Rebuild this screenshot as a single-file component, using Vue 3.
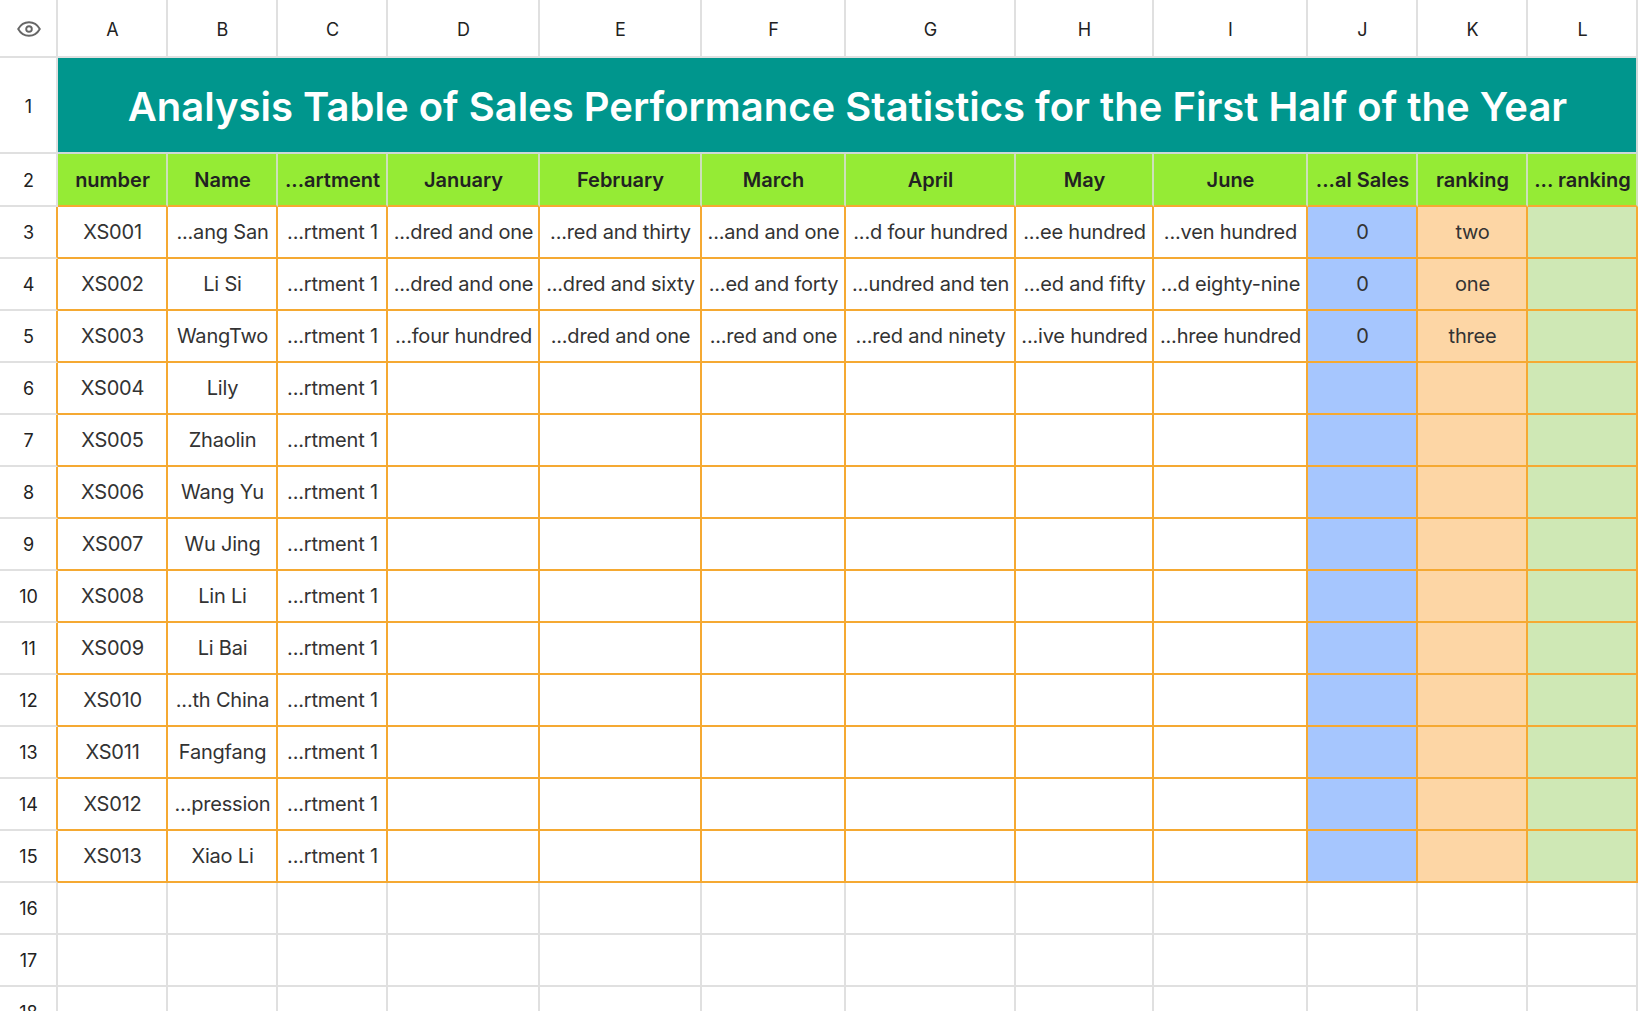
<script setup>
const letters = ['A', 'B', 'C', 'D', 'E', 'F', 'G', 'H', 'I', 'J', 'K', 'L']
const headers = ['number', 'Name', '...artment', 'January', 'February', 'March', 'April', 'May', 'June', '...al Sales', 'ranking', '... ranking']

const people = ['...ang San', 'Li Si', 'WangTwo', 'Lily', 'Zhaolin', 'Wang Yu', 'Wu Jing', 'Lin Li', 'Li Bai', '...th China', 'Fangfang', '...pression', 'Xiao Li']
const sales = [
  ['...dred and one', '...red and thirty', '...and and one', '...d four hundred', '...ee hundred', '...ven hundred', '0', 'two', ''],
  ['...dred and one', '...dred and sixty', '...ed and forty', '...undred and ten', '...ed and fifty', '...d eighty-nine', '0', 'one', ''],
  ['...four hundred', '...dred and one', '...red and one', '...red and ninety', '...ive hundred', '...hree hundred', '0', 'three', '']
]
const blank = ['', '', '', '', '', '', '', '', '']

const rows = people.map((name, i) => {
  const id = 'XS' + String(i + 1).padStart(3, '0')
  return {
    num: i + 3,
    cells: [id, name, '...rtment 1', ...(sales[i] || blank)]
  }
})

// colored result columns J, K, L
const tint = (index) => ({ 9: 'blue', 10: 'peach', 11: 'lime' })[index] || ''
</script>

<template>
  <div class="sheet">
    <div class="corner head top">
      <svg width="24" height="16" viewBox="0 0 24 16" fill="none" stroke="#666" stroke-width="1.9">
        <path d="M1.2 8C3.6 3.7 7.500 1.200 12 1.200S20.400 3.700 22.800 8C20.400 12.300 16.500 14.800 12 14.800S3.600 12.300 1.200 8Z" />
        <circle cx="12" cy="8" r="2.800" />
      </svg>
    </div>
    <div v-for="l in letters" :key="l" class="head top">{{ l }}</div>

    <div class="head top">1</div>
    <div class="title">Analysis Table of Sales Performance Statistics for the First Half of the Year</div>

    <div class="head top">2</div>
    <div v-for="h in headers" :key="h" class="label">{{ h }}</div>

    <template v-for="row in rows" :key="row.num">
      <div class="head mark">{{ row.num }}</div>
      <div v-for="(c, i) in row.cells" :key="i" class="cell" :class="tint(i)">{{ c }}</div>
    </template>

    <template v-for="n in [16, 17, 18]" :key="n">
      <div class="head">{{ n }}</div>
      <div v-for="l in letters" :key="l" class="empty"></div>
    </template>
  </div>
</template>

<style scoped>
.sheet {
  display: grid;
  grid-template-columns: 58px 110px 110px 110px 152px 162px 144px 170px 138px 154px 110px 110px 110px;
  grid-template-rows: 58px 96px 53px repeat(16, 52px);
  width: 1640px;
  height: 1011px;
  overflow: hidden;
  font-family: Inter, "Liberation Sans", sans-serif;
  font-size: 20px;
  letter-spacing: -0.2px;
  color: #333;
  background: #fff;
}

.head, .label, .cell, .title, .empty {
  display: flex;
  align-items: center;
  justify-content: center;
  box-sizing: border-box;
  padding-left: 1px;
  white-space: nowrap;
  border-right: 2px solid #e0e0e0;
  border-bottom: 2px solid #e0e0e0;
}

.head {
  font-size: 18px;
  letter-spacing: 0;
  color: #222;
}

.head.top {
  padding-top: 2px;
}

.corner svg {
  display: block;
}

.title {
  grid-column: span 12;
  padding-top: 2px;
  background: #00968d;
  color: #fff;
  font-size: 40px;
  font-weight: 600;
  letter-spacing: 0;
  border-color: #cfd8d6;
}

.label {
  padding-top: 1px;
  background: #95eb35;
  color: #222;
  font-weight: 600;
  letter-spacing: 0;
  border-right-color: #cde0bb;
  border-bottom-color: #f5a932;
}

.head.mark {
  border-right-color: #f5a932;
}

.cell {
  border-color: #f5a932;
}

.blue {
  background: #a6c6fe;
}

.peach {
  background: #fdd6a5;
}

.lime {
  background: #cfe8b5;
}
</style>

<style>
html, body {
  margin: 0;
  overflow: hidden;
}
</style>
